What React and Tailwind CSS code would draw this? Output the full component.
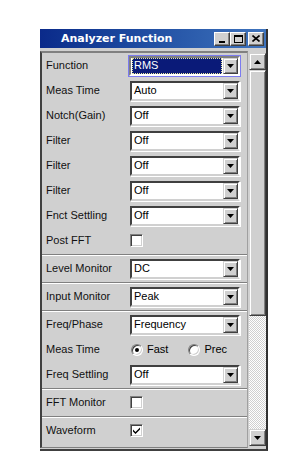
import React from "react";

const font = { fontFamily: '"Liberation Sans", Arial, sans-serif' };

function Arrow({ dir = "down" }) {
  return (
    <svg width="7" height="4" viewBox="0 0 7 4" className={dir === "up" ? "rotate-180" : ""}>
      <path d="M0 0H7L3.5 4Z" fill="#000" />
    </svg>
  );
}

function DropBtn() {
  return (
    <div className="w-[15px] h-[16px] bg-[#d0d0d0] flex items-center justify-center border border-t-[#d0d0d0] border-l-[#d0d0d0] border-r-[#404040] border-b-[#404040] shadow-[inset_1px_1px_0_#fff,inset_-1px_-1px_0_#808080]">
      <Arrow />
    </div>
  );
}

function Combo({ value, focused }) {
  if (focused) {
    return (
      <div className="w-[113px] h-[22px] -ml-[2px] border border-[#7b7bf0] p-0">
        <div className="w-full h-full flex items-center border-2 border-t-[#808080] border-l-[#808080] border-r-white border-b-white bg-white">
          <div className="flex-1 h-[16px] ml-[1px] mr-[1px] bg-[#0a1a78] border border-dotted border-[#e8e8a0] flex items-center pl-[1px] text-[11px] text-white leading-none">
            {value}
          </div>
          <DropBtn />
        </div>
      </div>
    );
  }
  return (
    <div className="w-[110px] h-[20px] flex items-center border-2 border-t-[#404040] border-l-[#404040] border-r-white border-b-[#d0d0d0] bg-white shadow-[1px_1px_0_#fff]">
      <div className="flex-1 pl-[2px] text-[11px] text-black leading-none">{value}</div>
      <DropBtn />
    </div>
  );
}

function Check({ checked }) {
  return (
    <div className="w-[13px] h-[13px] bg-white border border-t-[#808080] border-l-[#808080] border-r-white border-b-white shadow-[inset_1px_1px_0_#404040,inset_-1px_-1px_0_#d0d0d0] flex items-center justify-center">
      {checked && (
        <svg width="9" height="9" viewBox="0 0 9 9">
          <path d="M1 3.5L3.5 6L8 1.5V3.5L3.5 8L1 5.5Z" fill="#000" />
        </svg>
      )}
    </div>
  );
}

function Radio({ checked }) {
  return (
    <div className="w-[12px] h-[12px] rounded-full bg-white border border-t-[#808080] border-l-[#808080] border-r-[#fff] border-b-[#fff] shadow-[inset_1px_1px_0_#404040,inset_-1px_-1px_0_#d0d0d0] flex items-center justify-center">
      {checked && <div className="w-[4px] h-[4px] rounded-full bg-black" />}
    </div>
  );
}

function Row({ label, children }) {
  return (
    <div className="flex items-center h-[25px]">
      <div className="w-[88px] pl-[4px] text-[11px] text-[#111] leading-none">{label}</div>
      {children}
    </div>
  );
}

function Sep() {
  return (
    <div className="h-[3px] flex flex-col justify-center">
      <div className="h-[1px] bg-[#808080]" />
      <div className="h-[1px] bg-white" />
    </div>
  );
}

function ScrollBtn({ dir }) {
  return (
    <div className="w-[17px] h-[17px] bg-[#d0d0d0] flex items-center justify-center border border-t-[#d0d0d0] border-l-[#d0d0d0] border-r-[#404040] border-b-[#404040] shadow-[inset_1px_1px_0_#fff,inset_-1px_-1px_0_#808080]">
      <Arrow dir={dir} />
    </div>
  );
}

function TitleBtn({ children, className = "" }) {
  return (
    <div className={"w-[16px] h-[14px] bg-[#d0d0d0] border border-t-white border-l-white border-r-[#404040] border-b-[#404040] shadow-[inset_-1px_-1px_0_#808080] flex items-center justify-center " + className}>
      {children}
    </div>
  );
}

export default function App() {
  return (
    <div className="w-[287px] h-[471px] bg-white overflow-hidden" style={font}>
      <div className="ml-[40px] mt-[29px] w-[228px] h-[422px] flex flex-col bg-[#d0d0d0] border-r-2 border-b-2 border-r-[#303030] border-b-[#404040]">
        <div className="h-[19px] flex items-center bg-gradient-to-r from-[#0b2a8a] to-[#3f74bd]">
          <div className="pl-[21px] flex-1 text-white font-bold leading-none" style={{ fontFamily: '"DejaVu Sans", Verdana, sans-serif', fontSize: "11px" }}>
            Analyzer Function
          </div>
          <div className="flex items-center pr-[2px]">
            <TitleBtn className="items-end pb-[2px]">
              <div className="w-[6px] h-[2px] bg-black" />
            </TitleBtn>
            <TitleBtn>
              <div className="w-[9px] h-[8px] border border-black border-t-2" />
            </TitleBtn>
            <TitleBtn className="ml-[2px]">
              <svg width="8" height="7" viewBox="0 0 8 7">
                <path d="M0.5 0.5L7.5 6.5M7.5 0.5L0.5 6.5" stroke="#000" strokeWidth="1.6" />
              </svg>
            </TitleBtn>
          </div>
        </div>
        <div className="flex-1 flex pt-[3px] pb-[1px]">
          <div className="flex-1 border-l-2 border-t-2 border-l-[#404040] border-t-[#808080] border-r border-r-[#a0a0a0] border-b border-b-[#808080]">
            <Row label="Function"><Combo value="RMS" focused /></Row>
            <Row label="Meas Time"><Combo value="Auto" /></Row>
            <Row label="Notch(Gain)"><Combo value="Off" /></Row>
            <Row label="Filter"><Combo value="Off" /></Row>
            <Row label="Filter"><Combo value="Off" /></Row>
            <Row label="Filter"><Combo value="Off" /></Row>
            <Row label="Fnct Settling"><Combo value="Off" /></Row>
            <Row label="Post FFT"><Check /></Row>
            <Sep />
            <Row label="Level Monitor"><Combo value="DC" /></Row>
            <Sep />
            <Row label="Input Monitor"><Combo value="Peak" /></Row>
            <Sep />
            <Row label="Freq/Phase"><Combo value="Frequency" /></Row>
            <Row label="Meas Time">
              <div className="flex items-center text-[11px] leading-none ml-[1px]">
                <Radio checked />
                <span className="ml-[4px]">Fast</span>
                <div className="ml-[20px]"><Radio /></div>
                <span className="ml-[4px]">Prec</span>
              </div>
            </Row>
            <Row label="Freq Settling"><Combo value="Off" /></Row>
            <Sep />
            <Row label="FFT Monitor"><Check /></Row>
            <Sep />
            <Row label="Waveform"><Check checked /></Row>
          </div>
          <div className="w-[17px] ml-[1px] mt-[2px] mb-[2px] flex flex-col">
            <ScrollBtn dir="up" />
            <div className="h-[246px] bg-[#d0d0d0] border border-t-[#d0d0d0] border-l-[#d0d0d0] border-r-[#404040] border-b-[#404040] shadow-[inset_1px_1px_0_#fff,inset_-1px_-1px_0_#808080]" />
            <div className="flex-1 bg-[repeating-conic-gradient(#d0d0d0_0_25%,#ffffff_0_50%)] bg-[length:2px_2px]" />
            <ScrollBtn dir="down" />
          </div>
        </div>
      </div>
    </div>
  );
}
